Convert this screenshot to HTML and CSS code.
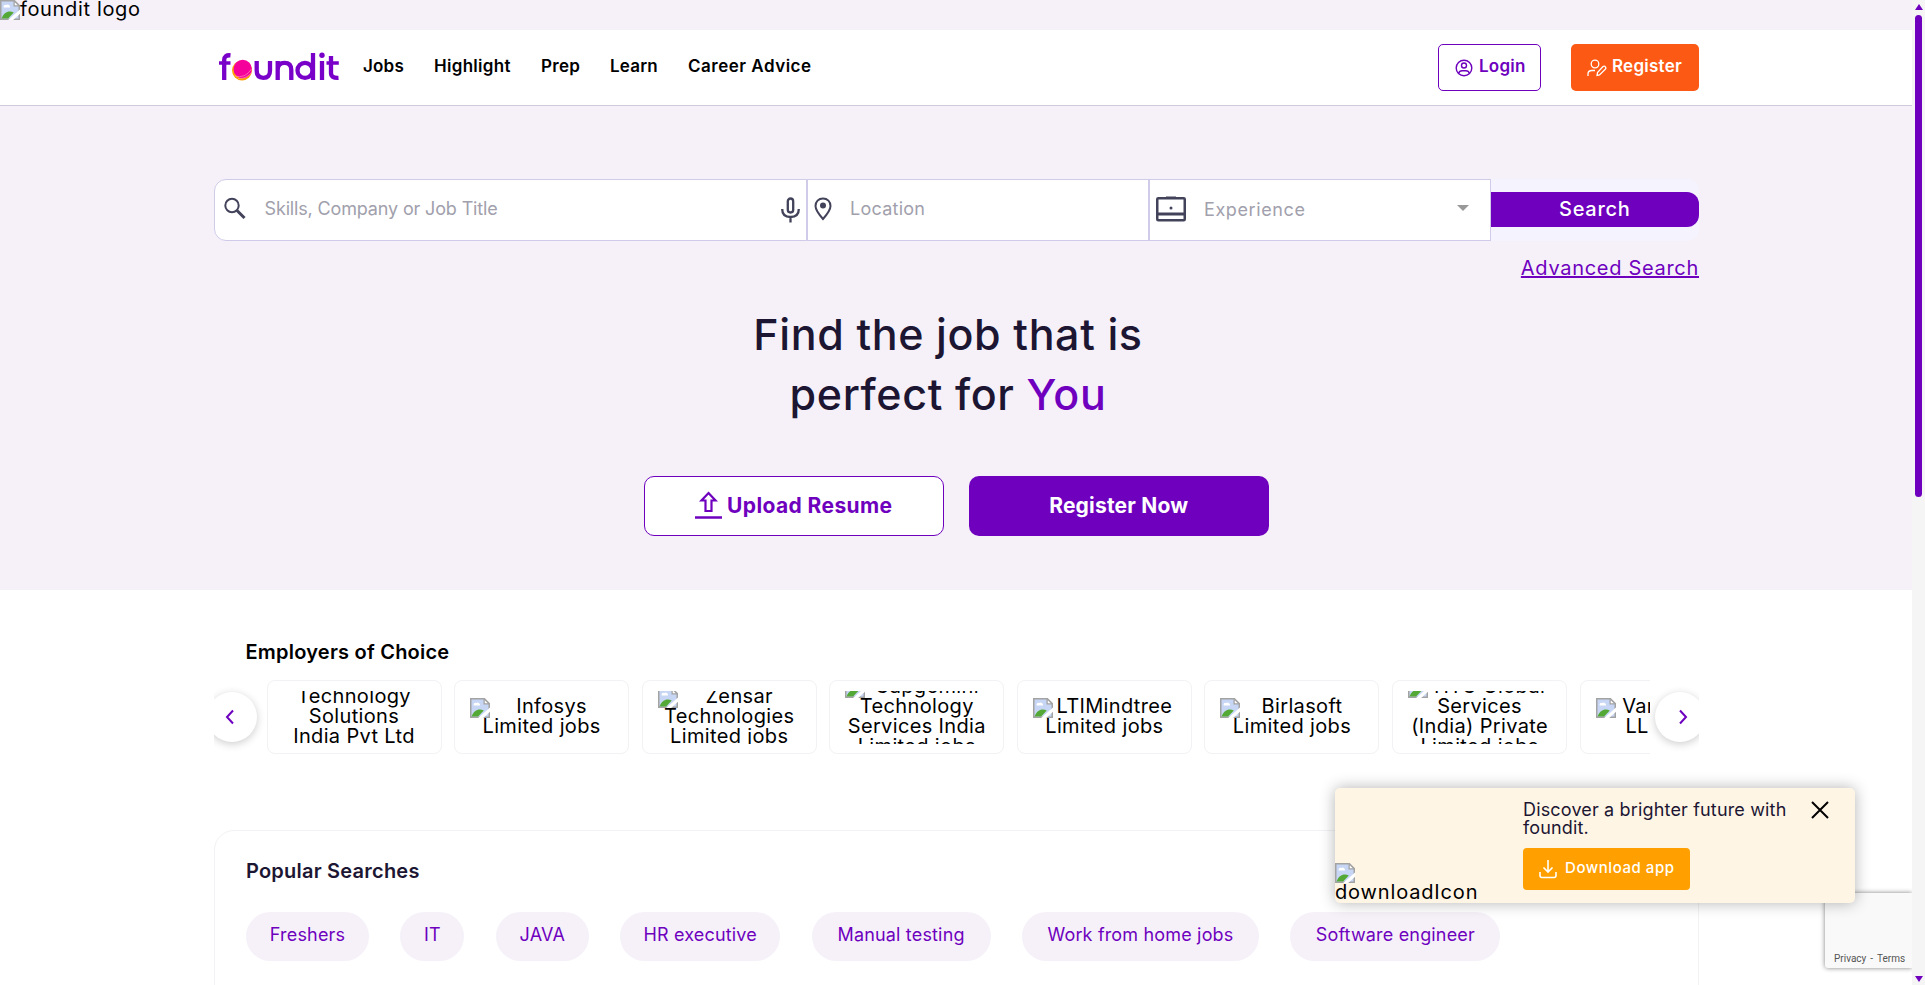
FILE: index.html
```html
<!DOCTYPE html>
<html lang="en">
<head>
<meta charset="utf-8">
<title>foundit</title>
<link rel="stylesheet" href="styles.css">
</head>
<body>
<svg width="0" height="0" class="defs">
  <symbol id="broken" viewBox="0 0 16 16">
    <path d="M0.600 0.600H11.500L15.400 4.500V15.400H0.600Z" fill="#c6d6f4" stroke="#a3a3a3" stroke-width="1.200"/>
    <path d="M11.300 .6V4.700H15.400Z" fill="#fff" stroke="#a3a3a3"/>
    <path d="M3 6a1.500 1.500 0 0 1 2-2a2 2 0 0 1 3 2Z" fill="#fff"/>
    <path d="M1.200 14.800C3 10 7 8 11 10L6.500 14.800Z" fill="#54a936"/>
    <path d="M6.500 16L16 7.500V11L10.500 16Z" fill="#fff"/>
  </symbol>
</svg>
<div class="page">
  <main class="content">
    <div class="strip"><svg class="broken"><use href="#broken"/></svg><span class="strip-text">foundit logo</span></div>
    <header class="header">
      <svg class="logo" viewBox="0 0 122 30" width="122" height="30">
        <g fill="none" stroke="#7800c8" stroke-width="4.300">
          <path d="M5.200 28V8Q5.200 2.700 11.500 3.300"/>
          <path d="M37.700 9V18.500Q37.700 25.800 44.400 25.800T51 18.500V9"/>
          <path d="M58.700 9V28M58.700 18Q58.700 10.800 65.500 10.800T72.300 18V28"/>
          <circle cx="86" cy="18.400" r="7.500"/><path d="M94 1V28M103 9V28M112 4V21Q112 26.300 119.500 25.800"/>
          <path d="M0 10.900H11.500M107.500 10.900H119.800" stroke-width="3.500"/>
        </g>
        <circle cx="103" cy="3.300" r="2.700" fill="#7800c8"/>
        <circle cx="23" cy="18.500" r="10" fill="#ffa000"/>
        <circle cx="23.700" cy="17" r="9.200" fill="#f6009b"/>
        <path d="M16 24Q26 27 32.500 17M19 26.500Q28 27 33 20" fill="none" stroke="#ff9fbd" stroke-width=".6"/>
      </svg>
      <nav class="nav"><a class="n1">Jobs</a><a class="n2">Highlight</a><a class="n3">Prep</a><a class="n4">Learn</a><a class="n5">Career Advice</a></nav>
      <div class="auth">
        <a class="login"><svg width="18" height="18" viewBox="0 0 18 18" fill="none" stroke="#6e00be" stroke-width="1.400"><circle cx="9" cy="9" r="7.800"/><circle cx="9" cy="6.500" r="2.500"/><path d="M3.500 14.500Q4.500 11.800 7 11.800H11Q13.500 11.800 14.500 14.500"/></svg><span>Login</span></a>
        <a class="register"><svg width="20" height="18" viewBox="0 0 20 18" fill="none" stroke="#fff" stroke-width="1.300"><circle cx="8" cy="5" r="3.800"/><path d="M1 17V15Q1 11.500 5 11.500H8M10 16.500L10.500 13.500L16 7.500Q17.500 6.500 18.500 8T18 10.500L12.500 16Z"/></svg><span>Register</span></a>
      </div>
    </header>
    <section class="hero">
      <div class="search">
        <div class="field skills">
          <svg width="24" height="24" viewBox="0 0 24 24" fill="none" stroke="#42425a"><circle cx="9" cy="8.500" r="6.700" stroke-width="2"/><path d="M14 13.500L21.500 21" stroke-width="3"/></svg>
          <span class="ph p1">Skills, Company or Job Title</span>
          <svg class="mic" width="20" height="26" viewBox="0 0 20 26" fill="none" stroke="#42425a" stroke-width="2.300"><rect x="6.800" y="1.500" width="5.400" height="14" rx="2.700"/><path d="M1.200 12Q1.200 20 9.500 20T17.800 12M9.500 20V25.500"/></svg>
        </div>
        <div class="field location">
          <svg width="18" height="24" viewBox="0 0 18 24" fill="none"><path d="M9 1.500C13.500 1.500 16.500 4.800 16.500 9C16.500 13.500 9 22 9 22S1.500 13.500 1.500 9C1.500 4.800 4.500 1.500 9 1.500Z" stroke="#42425a" stroke-width="2"/><circle cx="9" cy="8.500" r="3" fill="#42425a"/></svg>
          <span class="ph p2">Location</span>
        </div>
        <div class="field exp">
          <svg width="30" height="26" viewBox="0 0 30 26"><path d="M10 2V0.500H20V2" fill="#42425a"/><rect x="1.250" y="2.250" width="27.500" height="22" rx="1" fill="none" stroke="#42425a" stroke-width="2.500"/><path d="M1 18H29" stroke="#42425a" stroke-width="3"/><circle cx="15" cy="12" r="1.500" fill="#42425a"/></svg>
          <span class="ph p3">Experience</span>
          <i class="caret"></i>
        </div>
        <div class="submit"><span>Search</span></div>
      </div>
      <a class="advanced">Advanced Search</a>
      <h1 class="title"><span>Find the job that is</span><span>perfect for <b>You</b></span></h1>
      <div class="cta">
        <a class="upload"><svg width="27" height="28" viewBox="0 0 27 28"><path d="M0 26.500H27" stroke="#6e00be" stroke-width="2.500"/><path d="M13.500 2L20.500 9.500H16.500V20H10.500V9.500H6.500Z" fill="none" stroke="#6e00be" stroke-width="2.200"/></svg><span>Upload Resume</span></a>
        <a class="now"><span>Register Now</span></a>
      </div>
    </section>
    <section class="employers">
      <h2 class="e-title">Employers of Choice</h2>
      <div class="slider">
        <div class="arrow prev"><svg width="10" height="16" viewBox="0 0 10 16"><path d="M8 1.500L2 8L8 14.500" fill="none" stroke="#6e00be" stroke-width="2"/></svg></div>
        <div class="track">
          <div class="card"><p><span class="line">Technology</span><span class="line">Solutions</span><span class="line">India Pvt Ltd</span></p></div>
          <div class="card"><p><span class="first"><svg class="broken"><use href="#broken"/></svg><span class="line">Infosys</span></span><span class="line">Limited jobs</span></p></div>
          <div class="card"><p><span class="first"><svg class="broken"><use href="#broken"/></svg><span class="line">Zensar</span></span><span class="line">Technologies</span><span class="line">Limited jobs</span></p></div>
          <div class="card"><p><span class="first"><svg class="broken"><use href="#broken"/></svg><span class="line">Capgemini</span></span><span class="line">Technology</span><span class="line">Services India</span><span class="line">Limited jobs</span></p></div>
          <div class="card"><p><span class="first"><svg class="broken"><use href="#broken"/></svg><span class="line">LTIMindtree</span></span><span class="line">Limited jobs</span></p></div>
          <div class="card"><p><span class="first"><svg class="broken"><use href="#broken"/></svg><span class="line">Birlasoft</span></span><span class="line">Limited jobs</span></p></div>
          <div class="card"><p><span class="first"><svg class="broken"><use href="#broken"/></svg><span class="line">HTC Global</span></span><span class="line">Services</span><span class="line">(India) Private</span><span class="line">Limited jobs</span></p></div>
          <div class="card"><p><span class="first"><svg class="broken"><use href="#broken"/></svg><span class="line">Varite India</span></span><span class="line">LLP jobs</span></p></div>
        </div>
        <div class="arrow next"><svg width="10" height="16" viewBox="0 0 10 16"><path d="M2 1.500L8 8L2 14.500" fill="none" stroke="#6e00be" stroke-width="2"/></svg></div>
      </div>
    </section>
    <section class="popular">
      <h2 class="p-title">Popular Searches</h2>
      <div class="chips">
        <a class="c1">Freshers</a><a class="c2">IT</a><a class="c3">JAVA</a><a class="c4">HR executive</a><a class="c5">Manual testing</a><a class="c6">Work from home jobs</a><a class="c7">Software engineer</a>
      </div>
    </section>
  </main>
  <aside class="scrollbar"><i class="up"></i><i class="thumb"></i><i class="down"></i></aside>
</div>
<div class="captcha"><span>Privacy</span><span>-</span><span>Terms</span></div>
<div class="banner">
  <div class="banner-img"><svg class="broken"><use href="#broken"/></svg><span class="d-icon">downloadIcon</span></div>
  <div class="banner-body">
    <p class="b-text"><span>Discover a brighter future with</span><span>foundit.</span></p>
    <a class="download"><svg width="18" height="19" viewBox="0 0 18 19" fill="none" stroke="#fff" stroke-width="1.600"><path d="M9 0V12M4.500 7.500L9 12L13.500 7.500M1 12V15.500Q1 17.500 3 17.500H15Q17 17.500 17 15.500V12"/></svg><span>Download app</span></a>
  </div>
  <svg class="close" width="18" height="18" viewBox="0 0 18 18"><path d="M1 1L17 17M17 1L1 17" stroke="#000" stroke-width="2"/></svg>
</div>
</body>
</html>
```
FILE: styles.css
```css
* { box-sizing: border-box; }
body { margin: 0; height: 985px; overflow: hidden; background: #fff; color: #000; font-family: Inter, "Open Sans", sans-serif; font-size: 20px; }
a, span { white-space: nowrap; }
h1, h2, p { margin: 0; font-weight: 500; }
.defs { position: absolute; }
.broken { width: 20px; height: 20px; flex: none; display: block; }
.page { display: flex; height: 985px; }
.content { width: 1912px; height: 985px; overflow: hidden; }
.scrollbar { width: 13px; background: #f5f5f5; display: flex; flex-direction: column; align-items: center; padding: 4px 0 3px; }
.up { border: 4px solid transparent; border-top: 0; border-bottom: 6px solid #6e00be; }
.thumb { width: 7px; height: 482px; margin-top: 5px; border-radius: 4px; background: #6e00be; }
.down { margin-top: auto; border: 4px solid transparent; border-bottom: 0; border-top: 6px solid #6e00be; }

.strip { height: 30px; background: #f6f1f9; display: flex; line-height: 18px; }
.strip-text { letter-spacing: .65px; }
.header { height: 76px; border-bottom: 1px solid #cfcbdb; display: flex; padding-left: 219px; }
.logo { margin-top: 22px; }
.nav { display: flex; gap: 30px; margin-left: 22px; font-size: 17px; font-weight: 600; line-height: 72px; }
.n1 { width: 41px; letter-spacing: .2px; }
.n2 { width: 77px; letter-spacing: .3px; }
.n3 { width: 39px; letter-spacing: .3px; }
.n4 { width: 48px; letter-spacing: .2px; }
.n5 { width: 124px; letter-spacing: .5px; }
.auth { margin: 14px 213px 0 auto; display: flex; gap: 30px; font-size: 17px; font-weight: 600; }
.login, .register { height: 47px; border-radius: 5px; display: flex; align-items: center; padding-left: 16px; gap: 6px; }
.login { width: 103px; border: 1px solid #6e00be; color: #6e00be; }
.register { width: 128px; background: #fc5a14; color: #fff; gap: 5px; }
.auth span { margin-top: -3px; letter-spacing: .25px; }

.hero { height: 484px; background: #f6f1f9; padding: 73px 213px 0 213.5px; display: flex; flex-direction: column; }
.search { display: flex; height: 62px; background: #f5f3fe; border-radius: 12px; }
.field { background: #fff; border: 1px solid #d0cbe8; display: flex; align-items: center; padding-left: 8px; color: #a1a0ac; font-size: 18px; }
.skills { width: 593.5px; border-radius: 12px 0 0 12px; }
.skills svg, .location svg, .exp svg { margin-bottom: 2px; }
.location { width: 342px; padding-left: 6px; }
.exp { width: 341.5px; padding-left: 6px; }
.ph { margin: -4px 0 0 18px; }
.p1 { letter-spacing: -.15px; }
.p2 { letter-spacing: .25px; }
.p3 { letter-spacing: .6px; margin-top: -2px; }
.skills .mic { margin: 0 5px 0 auto; }
.caret { margin: -5px 21px 0 auto; border: 6px solid transparent; border-bottom: 0; border-top-color: #999; }
.submit { flex: 1; height: 35px; margin-top: 13px; background: #6e00be; border-radius: 0 12px 12px 0; color: #fff; font-weight: 500; letter-spacing: .7px; display: flex; align-items: center; justify-content: center; padding-bottom: 1px; }
.advanced { align-self: flex-end; margin-top: 15px; line-height: 24px; color: #6e00be; text-decoration: underline; letter-spacing: .7px; }
.title { margin-top: 24px; width: 1469px; color: #1c1633; font-size: 43px; line-height: 60px; letter-spacing: .6px; text-align: center; display: flex; flex-direction: column; }
.title b { color: #6e00be; font-weight: 500; }
.cta { display: flex; gap: 25px; justify-content: center; margin-top: 52px; font-size: 21px; font-weight: 700; }
.cta a { width: 300px; height: 60px; border-radius: 10px; display: flex; align-items: center; justify-content: center; padding-bottom: 2px; }
.upload { background: #fff; border: 1px solid #6e00be; color: #6e00be; gap: 5px; letter-spacing: .4px; }
.now { background: #6e00be; color: #fff; letter-spacing: .2px; }

.employers { height: 240px; padding: 48px 0 0 213.5px; }
.e-title, .p-title { font-size: 20px; font-weight: 600; line-height: 28px; letter-spacing: .22px; }
.e-title { margin-left: 32px; }
.slider { width: 1485.5px; height: 84px; margin-top: 9px; display: flex; align-items: center; overflow: hidden; position: relative; }
.arrow { position: absolute; z-index: 2; width: 50px; height: 50px; border-radius: 50%; background: #fff; box-shadow: 0 2px 8px rgba(0,0,0,.2); display: flex; align-items: center; justify-content: center; top: 17px; }
.prev { left: -6.5px; padding-right: 5px; }
.next { left: 1441.5px; padding-left: 5px; }
.track { margin-left: 50px; width: 1386.5px; display: flex; gap: 12.6px; overflow: hidden; padding-left: 3px; }
.card { flex: 0 0 175px; height: 74px; border: 1px solid #f2f1f4; border-radius: 8px; padding: 10px 15px; display: flex; }
.card p { flex: 1; height: 53px; overflow: hidden; display: flex; flex-direction: column; align-items: center; justify-content: center; font-weight: 400; letter-spacing: .35px; }
.first { display: flex; align-self: stretch; flex: none; height: 20px; }
.first .line { flex: 1; text-align: center; }
.line { height: 20px; line-height: 17px; flex: none; }

.popular { width: 1485px; height: 200px; margin-left: 214px; border: 1px solid #f2f1f4; border-radius: 20px; padding: 26px 31px; }
.p-title { color: #1c1633; }
.chips { display: flex; gap: 31.4px; margin-top: 27px; }
.chips a { flex: none; height: 49px; line-height: 46px; border-radius: 25px; background: #f6f1f9; color: #6e00be; font-size: 18px; letter-spacing: .17px; text-align: center; }
.c1 { width: 123px; } .c2 { width: 64px; } .c3 { width: 93px; } .c4 { width: 160px; } .c5 { width: 179px; } .c6 { width: 237px; } .c7 { width: 210px; }

.banner { position: absolute; left: 1335px; top: 788px; width: 520px; height: 115px; background: #fff5e5; border-radius: 5px; box-shadow: 0 0 15px rgba(0,0,0,.3); display: flex; }
.banner-img { width: 188px; padding-top: 75px; }
.d-icon { display: block; line-height: 18px; letter-spacing: .85px; }
.b-text { font-size: 18px; line-height: 18px; font-weight: 400; letter-spacing: .16px; color: #1c1633; padding-top: 13px; display: flex; flex-direction: column; }
.download { width: 167px; height: 42px; margin-top: 11px; border-radius: 4px; background: #ffa000; color: #fff; display: flex; align-items: center; gap: 8px; padding-left: 16px; font-size: 15px; font-weight: 500; letter-spacing: .55px; }
.download span { margin-top: -3px; }
.close { margin: 13px 26px 0 auto; }
.captcha { position: absolute; left: 1825px; top: 893px; width: 87px; height: 75px; background: #f9f9f9; border-radius: 3px 0 0 3px; box-shadow: 0 0 5px gray; clip-path: inset(-6px 0 -6px -6px); font: 10px Roboto, sans-serif; color: #555; display: flex; gap: 4px; align-items: flex-end; padding: 0 0 4px 9px; }
```
